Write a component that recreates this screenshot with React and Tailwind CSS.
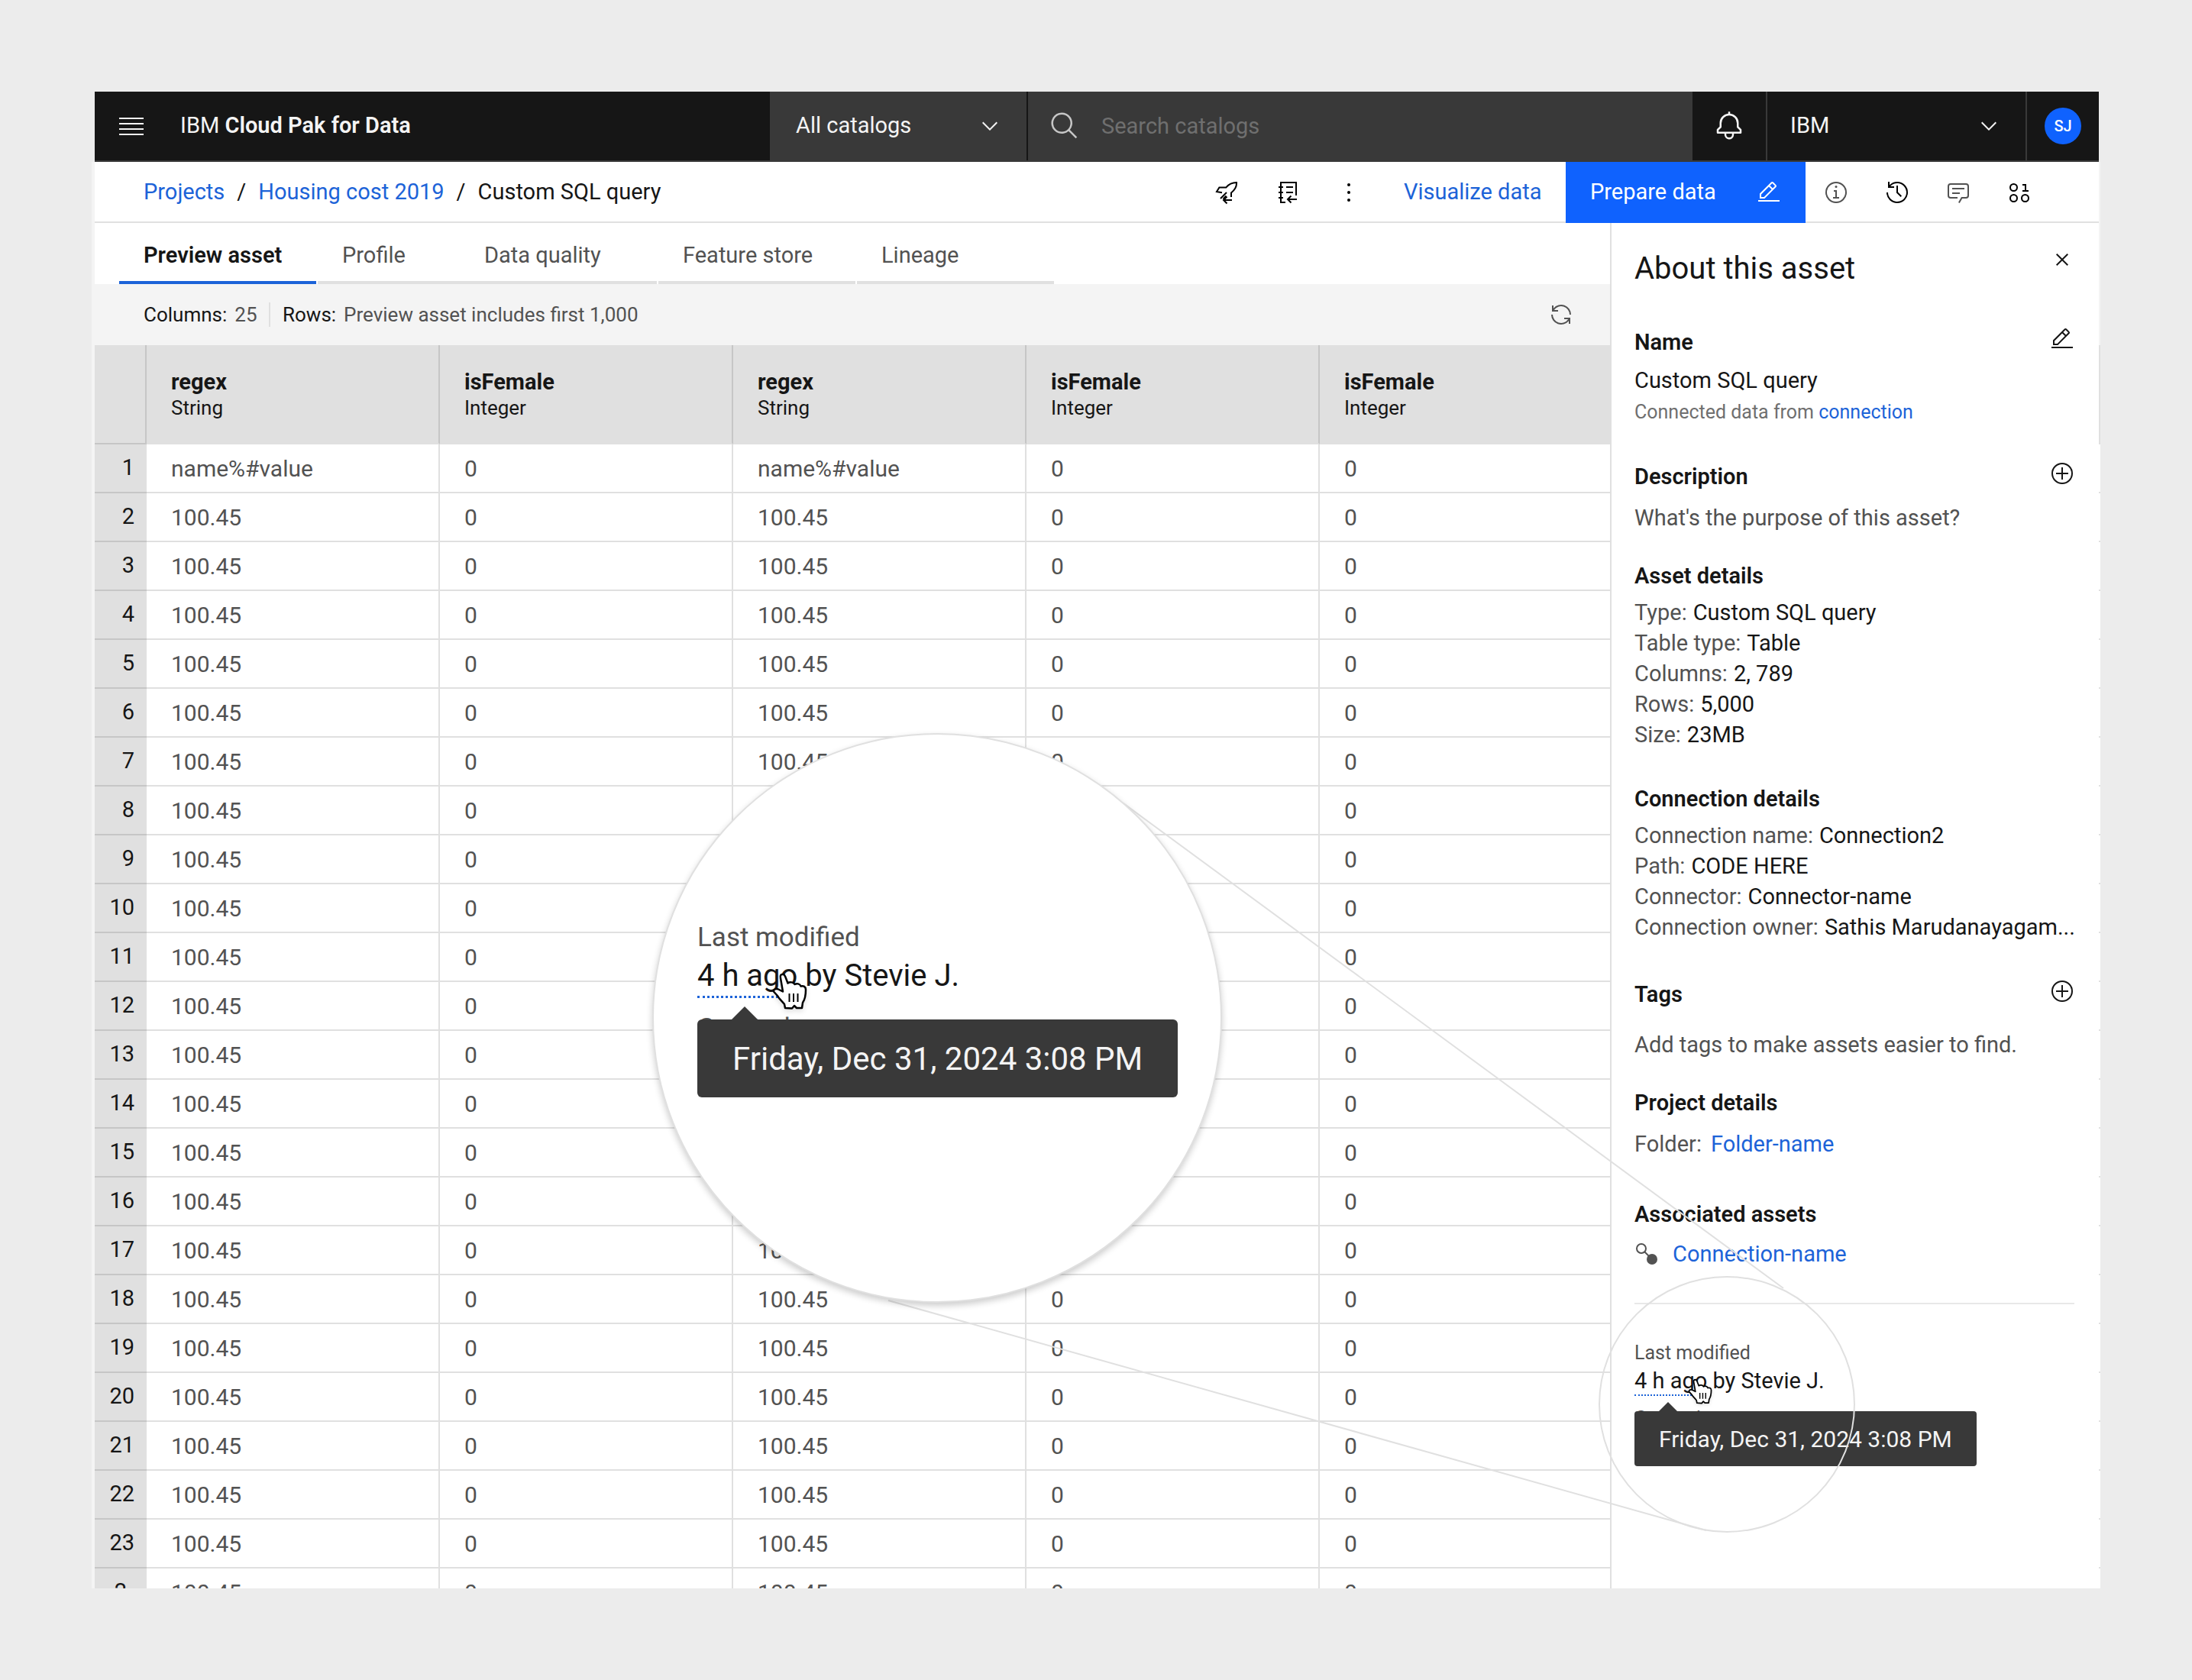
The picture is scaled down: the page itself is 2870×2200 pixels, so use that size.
import React from "react";

const rows = Array.from({ length: 23 }, (_, i) => i + 1);

const headers = [
  { name: "regex", type: "String" },
  { name: "isFemale", type: "Integer" },
  { name: "regex", type: "String" },
  { name: "isFemale", type: "Integer" },
  { name: "isFemale", type: "Integer" },
];

const assetDetails = [
  ["Type:", "Custom SQL query"],
  ["Table type:", "Table"],
  ["Columns:", "2, 789"],
  ["Rows:", "5,000"],
  ["Size:", "23MB"],
];

const connectionDetails = [
  ["Connection name:", "Connection2"],
  ["Path:", "CODE HERE"],
  ["Connector:", "Connector-name"],
  ["Connection owner:", "Sathis Marudanayagam..."],
];

function Icon({ children, className = "h-8 w-8" }) {
  return (
    <svg viewBox="0 0 32 32" fill="currentColor" aria-hidden="true" className={"shrink-0 " + className}>
      {children}
    </svg>
  );
}

const Chevron = ({ className }) => (
  <Icon className={className}>
    <path d="M16 22 6 12l1.4-1.4 8.6 8.6 8.6-8.6L26 12z" />
  </Icon>
);

const EditIcon = () => (
  <Icon>
    <path d="M2 26h28v2H2z" />
    <path d="M25.4,9c0.8-0.8,0.8-2,0-2.8l-3.6-3.6c-0.8-0.8-2-0.8-2.8,0l-15,15V24h6.4L25.4,9z M20.4,4L24,7.6l-3,3L17.4,7L20.4,4z M6,22v-3.6l10-10l3.6,3.6l-10,10H6z" />
  </Icon>
);

const AddIcon = () => (
  <Icon>
    <circle cx="16" cy="16" r="13" fill="none" stroke="currentColor" strokeWidth="2" />
    <path d="M24 15h-7V8h-2v7H8v2h7v7h2v-7h7z" />
  </Icon>
);

const RocketIcon = () => (
  <Icon>
    <g fill="none" stroke="currentColor" strokeWidth="2">
      <path d="M10 16.2 3 15l3.4-5.6h9C18.500 5.500 22.500 3 29 3c.4 5.500-2 9.500-7 13.500V22" />
      <path d="m16 16-8 8M15.500 20.500l-4 4" />
      <path d="M23 26H12M16.500 21.500 12 26l4.500 4.500" />
    </g>
  </Icon>
);

const NotebookIcon = () => (
  <Icon>
    <g fill="none" stroke="currentColor" strokeWidth="2">
      <path d="M13 29H7V3h20v17" />
      <path d="M4 9h6M4 16h6M4 23h6M14 9h9M14 16h9" />
      <path d="M28 25H16M20.500 20.500 16 25l4.500 4.500" />
    </g>
  </Icon>
);

const DotsIcon = () => (
  <Icon>
    <circle cx="16" cy="6" r="2" />
    <circle cx="16" cy="16" r="2" />
    <circle cx="16" cy="26" r="2" />
  </Icon>
);

const InfoIcon = () => (
  <Icon>
    <circle cx="16" cy="16" r="13" fill="none" stroke="currentColor" strokeWidth="2" />
    <path d="M17 22v-9h-4v2h2v7h-3v2h8v-2z" />
    <circle cx="16" cy="8.5" r="1.5" />
  </Icon>
);

const HistoryIcon = () => (
  <Icon>
    <path d="M20.590 22 15 16.410V7h2v8.580l5 5.010z" />
    <path d="M16,2A13.940,13.940,0,0,0,6,6.230V2H4v8h8V8H7.080A12,12,0,1,1,4,16H2A14,14,0,1,0,16,2Z" />
  </Icon>
);

const ChatIcon = () => (
  <Icon>
    <path d="M17.740,30,16,29l4-7h6a2,2,0,0,0,2-2V8a2,2,0,0,0-2-2H6A2,2,0,0,0,4,8V20a2,2,0,0,0,2,2h9v2H6a4,4,0,0,1-4-4V8A4,4,0,0,1,6,4H26a4,4,0,0,1,4,4V20a4,4,0,0,1-4,4H21.160Z" />
    <path d="M8 10h16v2H8zM8 16h10v2H8z" />
  </Icon>
);

const BinaryIcon = () => (
  <Icon>
    <g fill="none" stroke="currentColor" strokeWidth="2">
      <circle cx="8.500" cy="9.500" r="4.500" />
      <circle cx="8.500" cy="23.500" r="4.500" />
      <circle cx="23.500" cy="23.500" r="4.500" />
      <path d="M20 6h4v8M20 14h8" />
    </g>
  </Icon>
);

const HandCursor = ({ className }) => (
  <svg viewBox="0 0 50 52" aria-hidden="true" className={className}>
    <path
      d="M13 9C12 5 14 3.700 16 3.700c2 .2 3 2.300 4 5.300l2.500 6.500c2.500-2 7.500-1.500 9 1.500 2.500-1.500 7-1 8 2.500 3.500-1 6.500.5 6.500 4.500 0 7-.5 12-4 17l-1 7h-7l-3-3-3 3.500-9-.5-1-5c-3-4-7-7-9-11l-5-5.500c-.5-3 3-4.500 6-3l6 3z"
      fill="#fff"
      stroke="#000"
      strokeWidth="2.500"
      strokeLinejoin="round"
    />
    <path d="M24.500 29v11M30 29v11M35.500 29v11" stroke="#000" strokeWidth="2" />
  </svg>
);

function PanelIconButton({ label, children }) {
  return (
    <button type="button" aria-label={label} className="flex h-8 w-8 items-center justify-center">
      {children}
    </button>
  );
}

function Details({ items }) {
  return (
    <dl>
      {items.map(([k, v]) => (
        <div key={k} className="flex gap-2 leading-10 whitespace-nowrap">
          <dt className="text-[#525252]">{k}</dt>
          <dd>{v}</dd>
        </div>
      ))}
    </dl>
  );
}

function Header() {
  return (
    <header className="mr-0.5 ml-1 flex h-[92px] shrink-0 border-b-2 border-[#393939] bg-[#161616] text-[#f4f4f4]">
      <div className="flex w-[884px] shrink-0 items-center gap-12 pl-8">
        <button type="button" aria-label="Menu" className="flex w-8 flex-col gap-[5px]">
          <span className="h-0.5 bg-current" />
          <span className="h-0.5 bg-current" />
          <span className="h-0.5 bg-current" />
          <span className="h-0.5 bg-current" />
        </button>
        <div>
          IBM <span className="font-semibold">Cloud Pak for Data</span>
        </div>
      </div>
      <div className="relative flex w-[336px] shrink-0 items-center bg-[#393939]">
        <select
          aria-label="Catalog scope"
          className="h-full w-full appearance-none bg-transparent px-[34px] outline-none"
        >
          <option>All catalogs</option>
        </select>
        <Chevron className="pointer-events-none absolute right-8 h-8 w-8" />
      </div>
      <div className="flex flex-1 items-center gap-7 border-l-2 border-[#161616] bg-[#393939] pl-7 text-[#c6c6c6]">
        <Icon className="h-10 w-10">
          <path d="M29,27.586l-7.552-7.552a11.018,11.018,0,1,0-1.414,1.414L27.586,29ZM4,13a9,9,0,1,1,9,9A9.010,9.010,0,0,1,4,13Z" />
        </Icon>
        <input
          type="text"
          aria-label="Search catalogs"
          placeholder="Search catalogs"
          className="h-full min-w-0 flex-1 bg-transparent outline-none placeholder:text-[#6f6f6f]"
        />
      </div>
      <button type="button" aria-label="Notifications" className="flex w-24 items-center justify-center">
        <Icon className="h-10 w-10">
          <path d="M28.707,19.293,26,16.586V13a10.014,10.014,0,0,0-9-9.949V1H15V3.051A10.014,10.014,0,0,0,6,13v3.586L3.293,19.293A1,1,0,0,0,3,20v3a1,1,0,0,0,1,1h7v.777a5.152,5.152,0,0,0,4.500,5.199A5.006,5.006,0,0,0,21,25V24h7a1,1,0,0,0,1-1V20A1,1,0,0,0,28.707,19.293ZM19,25a3,3,0,0,1-6,0V24h6Zm8-3H5V20.414L7.707,17.707A1,1,0,0,0,8,17V13a8,8,0,0,1,16,0v4a1,1,0,0,0,.293.707L27,20.414Z" />
        </Icon>
      </button>
      <div className="relative flex w-[340px] shrink-0 items-center border-l-2 border-[#393939]">
        <select
          aria-label="Account"
          className="h-full w-full appearance-none bg-transparent px-[30px] outline-none"
        >
          <option>IBM</option>
        </select>
        <Chevron className="pointer-events-none absolute right-8 h-8 w-8" />
      </div>
      <div className="flex w-24 shrink-0 items-center justify-center border-l-2 border-[#393939]">
        <button
          type="button"
          className="flex h-12 w-12 items-center justify-center rounded-full bg-[#0f62fe] text-xl font-medium text-white"
        >
          SJ
        </button>
      </div>
    </header>
  );
}

function ActionBar() {
  return (
    <div className="mr-0.5 flex h-20 shrink-0 items-stretch bg-white">
      <nav
        aria-label="Breadcrumb"
        className="flex flex-1 items-center gap-4 border-b-2 border-[#e0e0e0] pt-0.5 pl-16 whitespace-nowrap"
      >
        <a href="#projects" className="text-[#1c63d8]">Projects</a>
        <span>/</span>
        <a href="#housing" className="text-[#1c63d8]">Housing cost 2019</a>
        <span>/</span>
        <span>Custom SQL query</span>
      </nav>
      <div className="flex items-center gap-12 border-b-2 border-[#e0e0e0] pt-0.5 pr-14 text-black">
        <button type="button" aria-label="Deploy"><RocketIcon /></button>
        <button type="button" aria-label="Notebook"><NotebookIcon /></button>
        <button type="button" aria-label="More"><DotsIcon /></button>
      </div>
      <div className="flex w-[212px] items-center border-b-2 border-[#e0e0e0] pt-0.5">
        <button type="button" className="text-[#1c63d8] whitespace-nowrap">Visualize data</button>
      </div>
      <button
        type="button"
        className="flex w-[314px] items-center justify-between bg-[#0f62fe] px-8 text-white whitespace-nowrap"
      >
        Prepare data
        <EditIcon />
      </button>
      <div className="flex w-[384px] items-center gap-12 border-b-2 border-[#e0e0e0] pt-0.5 pl-6 text-black">
        <button type="button" aria-label="Information" className="text-[#525252]"><InfoIcon /></button>
        <button type="button" aria-label="History"><HistoryIcon /></button>
        <button type="button" aria-label="Comments" className="text-[#525252]"><ChatIcon /></button>
        <button type="button" aria-label="Data"><BinaryIcon /></button>
      </div>
    </div>
  );
}

function Tabs() {
  const tab = "flex h-20 items-center border-b-4 border-[#e0e0e0] pt-2.5 pl-8 text-left text-[#525252]";
  return (
    <div role="tablist" className="flex h-20 shrink-0 gap-0.5 bg-white pl-8">
      <button
        type="button"
        role="tab"
        aria-selected="true"
        className="flex h-20 w-[258px] items-center border-b-4 border-[#1c63d8] pt-2.5 pl-8 font-semibold"
      >
        Preview asset
      </button>
      <div className="flex">
        <button type="button" role="tab" className={tab + " w-[186px]"}>Profile</button>
        <button type="button" role="tab" className={tab + " w-[258px]"}>Data quality</button>
      </div>
      <button type="button" role="tab" className={tab + " w-[258px]"}>Feature store</button>
      <button type="button" role="tab" className={tab + " w-[258px]"}>Lineage</button>
    </div>
  );
}

function InfoBar() {
  return (
    <div className="flex h-20 shrink-0 items-center bg-[#f4f4f4] pr-12 pl-16 text-[26px]">
      <div className="flex h-8 w-[166px] items-center gap-2.5 border-r-2 border-[#e0e0e0]">
        <span>Columns:</span>
        <span className="text-[#525252]">25</span>
      </div>
      <div className="flex flex-1 items-center gap-2.5 pl-4">
        <span>Rows:</span>
        <span className="text-[#525252]">Preview asset includes first 1,000</span>
      </div>
      <button type="button" aria-label="Refresh" className="text-[#525252]">
        <Icon>
          <path d="M12,10H6.780A11,11,0,0,1,27,16h2A13,13,0,0,0,6,7.680V4H4v8h8Z" />
          <path d="M20,22h5.220A11,11,0,0,1,5,16H3a13,13,0,0,0,23,8.320V28h2V20H20Z" />
        </Icon>
      </button>
    </div>
  );
}

function DataRow({ index, first }) {
  const cell = "h-16 border-r-2 border-b-2 border-[#e0e0e0] pl-8 text-[30px] text-[#525252] last:border-r-0";
  const text = first ? "name%#value" : "100.45";
  return (
    <tr className="bg-white">
      {index}
      <td className={cell}>{text}</td>
      <td className={cell}>0</td>
      <td className={cell}>{text}</td>
      <td className={cell}>0</td>
      <td className={cell}>0</td>
    </tr>
  );
}

function DataTable() {
  const idx = "h-16 border-b-2 border-[#c6c6c6] bg-[#e0e0e0] font-normal";
  return (
    <table className="w-full table-fixed border-separate border-spacing-0">
      <colgroup>
        <col className="w-[68px]" />
        <col className="w-96" />
        <col className="w-96" />
        <col className="w-96" />
        <col className="w-96" />
        <col />
      </colgroup>
      <thead>
        <tr className="bg-[#e0e0e0]">
          <td className="h-[130px] border-r-2 border-b-2 border-[#c6c6c6]" />
          {headers.map((h, i) => (
            <th
              key={i}
              scope="col"
              className="border-r-2 border-b-2 border-r-[#c6c6c6] border-b-[#e0e0e0] pl-8 text-left last:border-r-0"
            >
              <div className="leading-9 font-bold">{h.name}</div>
              <div className="text-[26px] leading-8 font-normal">{h.type}</div>
            </th>
          ))}
        </tr>
      </thead>
      <tbody>
        {rows.map((n) => (
          <DataRow
            key={n}
            first={n === 1}
            index={<th scope="row" className={idx + " pr-4 text-right"}>{n}</th>}
          />
        ))}
        <DataRow index={<th scope="row" className={idx + " text-center"}>2</th>} />
      </tbody>
    </table>
  );
}

function SidePanel() {
  return (
    <aside className="flex w-[640px] shrink-0 flex-col border-l-2 border-[#e0e0e0] bg-white pt-8 pr-8 pl-[30px]">
      <div className="flex items-start justify-between">
        <h2 className="text-[40px] leading-14">About this asset</h2>
        <PanelIconButton label="Close">
          <Icon>
            <path d="M17.414 16 24 9.414 22.586 8 16 14.586 9.414 8 8 9.414 14.586 16 8 22.586 9.414 24 16 17.414 22.586 24 24 22.586z" />
          </Icon>
        </PanelIconButton>
      </div>

      <div className="mt-12 flex items-start justify-between">
        <h3 className="leading-10 font-semibold">Name</h3>
        <PanelIconButton label="Edit name"><EditIcon /></PanelIconButton>
      </div>
      <p className="mt-2.5 leading-10">Custom SQL query</p>
      <p className="mt-1.5 text-[25px] leading-8 text-[#6f6f6f]">
        Connected data from <a href="#connection" className="text-[#1c63d8]">connection</a>
      </p>

      <div className="mt-12 flex items-start justify-between">
        <h3 className="leading-10 font-semibold">Description</h3>
        <PanelIconButton label="Add description"><AddIcon /></PanelIconButton>
      </div>
      <p className="mt-3.5 leading-10 text-[#525252]">What's the purpose of this asset?</p>

      <h3 className="mt-9 mb-2 leading-10 font-semibold">Asset details</h3>
      <Details items={assetDetails} />

      <h3 className="mt-11 mb-2 leading-10 font-semibold">Connection details</h3>
      <Details items={connectionDetails} />

      <div className="mt-12 flex items-start justify-between">
        <h3 className="leading-10 font-semibold">Tags</h3>
        <PanelIconButton label="Add tags"><AddIcon /></PanelIconButton>
      </div>
      <p className="mt-6.5 leading-10 text-[#525252]">Add tags to make assets easier to find.</p>

      <h3 className="mt-9 leading-10 font-semibold">Project details</h3>
      <p className="mt-3.5 flex gap-3 leading-10 text-[#525252]">
        Folder: <a href="#folder" className="text-[#1c63d8]">Folder-name</a>
      </p>

      <h3 className="mt-13 leading-10 font-semibold">Associated assets</h3>
      <div className="mt-3 flex items-center gap-[18px]">
        <Icon className="h-8 w-8 text-[#525252]">
          <circle cx="9" cy="9" r="6" fill="none" stroke="currentColor" strokeWidth="2" />
          <circle cx="23" cy="23" r="7" />
          <path d="m13 13 6 6" stroke="currentColor" strokeWidth="2" />
        </Icon>
        <a href="#connection-name" className="leading-10 text-[#1c63d8]">Connection-name</a>
      </div>
      <hr className="mt-11 border-t-2 border-[#e8e8e8]" />

      <div className="relative mt-12">
        <p className="text-[25px] leading-8 text-[#525252]">Last modified</p>
        <p className="mt-0.5 leading-9">
          <button type="button" className="border-b-2 border-dotted border-[#1c63d8] leading-9">4 h ago</button> by Stevie J.
        </p>
        <p className="mt-3.5 text-[25px] leading-8 text-[#525252]">Created</p>
        <HandCursor className="absolute top-12 left-[68px] h-9 w-9 drop-shadow-sm" />
        <div
          role="tooltip"
          className="absolute top-[92px] left-0 flex h-[72px] items-center rounded bg-[#393939] px-8 text-[30px] whitespace-nowrap text-[#f4f4f4]"
        >
          <svg viewBox="0 0 24 12" aria-hidden="true" className="absolute bottom-full left-8 h-3 w-6 fill-[#393939]">
            <path d="M0 12 12 0l12 12z" />
          </svg>
          Friday, Dec 31, 2024 3:08 PM
        </div>
      </div>
    </aside>
  );
}

/* Enlarged view of the last-modified tooltip, tied to its source by two guide lines. */
function Magnifier() {
  return (
    <div className="pointer-events-none absolute top-[840px] right-[320px] h-[1048px] w-[1576px]">
      <svg viewBox="0 0 1576 1048" fill="none" stroke="#e0e0e0" strokeWidth="2" aria-hidden="true" className="h-full w-full">
        <circle cx="1407" cy="879" r="167" />
        <path d="M617 92 1481 727M309 743 1380 1044" />
      </svg>
      <div className="absolute top-0 left-0 h-[746px] w-[746px] rounded-full border-2 border-[#e0e0e0] bg-white pt-[242px] pl-[57px] shadow-[0_4px_8px_rgba(0,0,0,0.2)]">
        <div className="relative">
          <p className="text-[35px] leading-12 text-[#525252]">Last modified</p>
          <p className="mt-0.5 text-[40px] leading-12">
            <span className="inline-block border-b-3 border-dotted border-[#1c63d8] pb-0.5">4 h ago</span> by Stevie J.
          </p>
          <p className="mt-4 text-[35px] leading-12 text-[#525252]">Created</p>
          <HandCursor className="absolute top-[68px] left-24 h-13 w-[50px] drop-shadow-md" />
          <div className="absolute top-[131px] left-0 flex h-[102px] items-center rounded-md bg-[#393939] px-[46px] text-[42px] whitespace-nowrap text-[#f4f4f4]">
            <svg viewBox="0 0 34 17" aria-hidden="true" className="absolute bottom-full left-[45px] h-[17px] w-[34px] fill-[#393939]">
              <path d="M0 17 17 0l17 17z" />
            </svg>
            Friday, Dec 31, 2024 3:08 PM
          </div>
        </div>
      </div>
    </div>
  );
}

export default function App() {
  return (
    <div className="flex h-screen flex-col bg-[#ececec] p-[120px] font-['Roboto',sans-serif] text-[29px] text-[#161616]">
      <div className="relative flex min-h-0 flex-1 flex-col overflow-hidden">
        <Header />
        <div className="flex min-h-0 flex-1 flex-col bg-[#f4f4f4] pl-1">
          <ActionBar />
          <div className="flex min-h-0 flex-1">
            <main className="flex min-w-0 flex-1 flex-col overflow-hidden">
              <Tabs />
              <InfoBar />
              <DataTable />
            </main>
            <SidePanel />
            <div className="flex w-0.5 flex-col pt-40">
              <div className="h-[130px] bg-[#e0e0e0]" />
              <div className="flex-1 bg-[repeating-linear-gradient(to_bottom,#fff_0_62px,#e0e0e0_62px_64px)]" />
            </div>
          </div>
        </div>
        <Magnifier />
      </div>
    </div>
  );
}
